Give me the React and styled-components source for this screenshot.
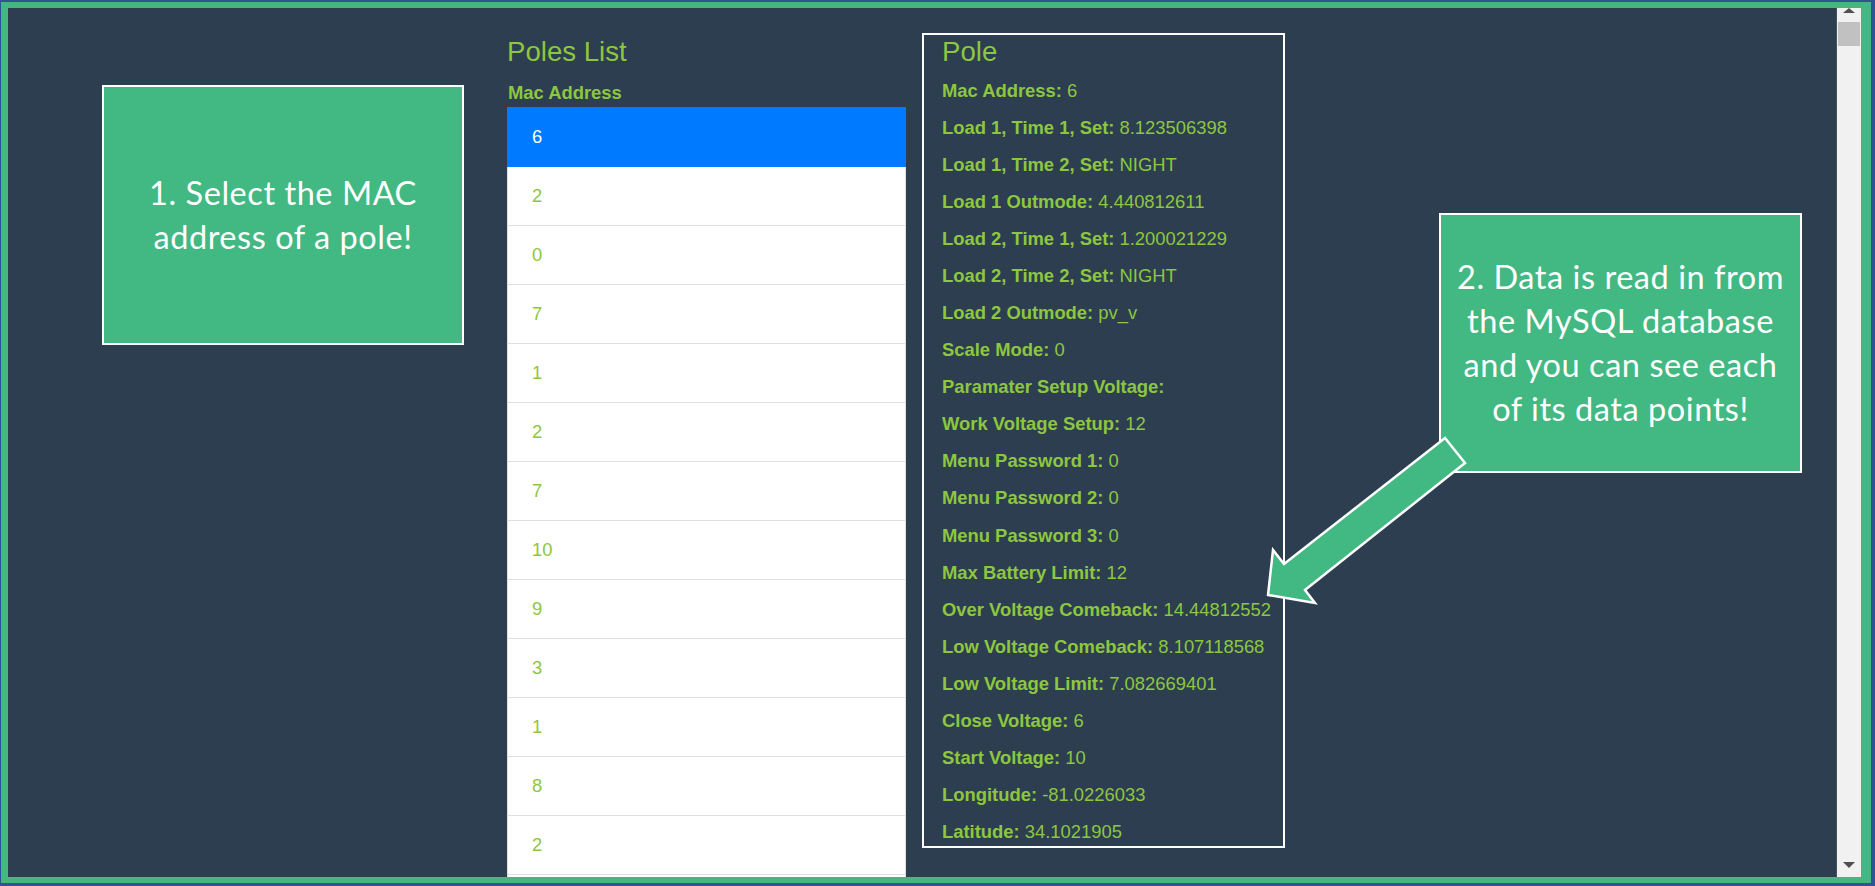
import React from 'react';
import styled, {createGlobalStyle} from 'styled-components';

const GlobalStyle = createGlobalStyle`
    html, body {
        margin: 0;
        padding: 0;
    }
    body {
        background: #2f5496;
        overflow: hidden;
        font-family: "Liberation Sans", Arial, sans-serif;
    }
`;

const GREEN = '#42b883';
const LIME = '#8dc63f';
const SLATE = '#2c3e50';

const Frame = styled.div`
    width: 1875px;
    height: 886px;
    box-sizing: border-box;
    padding: 2px 4px 3px 1px;
    background: #2f5496;
`;

const Page = styled.div`
    position: relative;
    height: 100%;
    box-sizing: border-box;
    border-style: solid;
    border-color: ${GREEN};
    border-width: 6px 10px 6px 7px;
    background: ${SLATE};
    display: flex;
    overflow: hidden;
`;

const Main = styled.div`
    flex: 1;
    display: flex;
    align-items: flex-start;
    padding: 25px 0 0 94px;
    min-width: 0;
`;

const Callout = styled.div`
    box-sizing: border-box;
    flex: none;
    width: ${p => p.$width}px;
    height: ${p => p.$height}px;
    margin-top: ${p => p.$top}px;
    margin-left: ${p => p.$left || 0}px;
    border: 2px solid #fff;
    background: ${GREEN};
    color: #fff;
    display: flex;
    align-items: center;
    justify-content: center;
    text-align: center;
    font-family: Lato, "Open Sans", sans-serif;
    font-size: 32.5px;
    letter-spacing: 0.55px;
    line-height: 44px;
`;

const ListColumn = styled.div`
    flex: none;
    width: 399px;
    margin: 2px 0 0 43px;
`;

const Title = styled.h3`
    margin: 0 0 ${p => p.$gap}px;
    font-size: 27.6px;
    font-weight: 400;
    line-height: 1.2;
    color: ${LIME};
`;

const ColumnHeader = styled.div`
    padding-left: 1px;
    font-size: 18.4px;
    font-weight: 700;
    line-height: 27.6px;
    color: ${LIME};
`;

const ListGroup = styled.ul`
    list-style: none;
    margin: 0;
    padding: 0;
`;

const ListItem = styled.li`
    box-sizing: border-box;
    height: 60px;
    margin-bottom: -1px;
    padding: 0 24px;
    display: flex;
    align-items: center;
    font-size: 18.4px;
    position: relative;
    z-index: ${p => (p.$active ? 2 : 1)};
    border: 1px solid ${p => (p.$active ? '#007bff' : '#dfdfdf')};
    background: ${p => (p.$active ? '#007bff' : '#fff')};
    color: ${p => (p.$active ? '#fff' : LIME)};
`;

const PolePanel = styled.div`
    box-sizing: border-box;
    flex: none;
    width: 363px;
    height: 815px;
    margin-left: 16px;
    padding: 0 18px;
    border: 2px solid #fff;
`;

const Fields = styled.div`
    display: grid;
    row-gap: 9.47px;
`;

const Field = styled.div`
    font-size: 18.4px;
    line-height: 27.6px;
    color: ${LIME};
    white-space: nowrap;

    b {
        font-weight: 700;
    }
`;

const Scrollbar = styled.div`
    flex: none;
    width: 24px;
    border-left: 1px solid #46535f;
    background: #f1f1f1;
    display: flex;
    flex-direction: column;
    align-items: center;
`;

const ScrollArrow = styled.div`
    width: 0;
    height: 0;
    border-left: 6px solid transparent;
    border-right: 6px solid transparent;
    ${p => (p.$down
        ? `border-top: 6px solid #505050; margin: auto 0 9px;`
        : `border-bottom: 5px solid #505050; margin-top: 0;`)}
`;

const Thumb = styled.div`
    width: 22px;
    height: 24px;
    margin-top: 9px;
    background: #c1c1c1;
`;

const Arrow = styled.svg`
    position: absolute;
    left: 1252px;
    top: 422px;
    overflow: visible;
`;

// last entry is the row peeking in at the bottom edge
const macs = ['6', '2', '0', '7', '1', '2', '7', '10', '9', '3', '1', '8', '2', ''];

const pole = [
    ['Mac Address', '6'],
    ['Load 1, Time 1, Set', '8.123506398'],
    ['Load 1, Time 2, Set', 'NIGHT'],
    ['Load 1 Outmode', '4.440812611'],
    ['Load 2, Time 1, Set', '1.200021229'],
    ['Load 2, Time 2, Set', 'NIGHT'],
    ['Load 2 Outmode', 'pv_v'],
    ['Scale Mode', '0'],
    ['Paramater Setup Voltage', ''],
    ['Work Voltage Setup', '12'],
    ['Menu Password 1', '0'],
    ['Menu Password 2', '0'],
    ['Menu Password 3', '0'],
    ['Max Battery Limit', '12'],
    ['Over Voltage Comeback', '14.44812552'],
    ['Low Voltage Comeback', '8.107118568'],
    ['Low Voltage Limit', '7.082669401'],
    ['Close Voltage', '6'],
    ['Start Voltage', '10'],
    ['Longitude', '-81.0226033'],
    ['Latitude', '34.1021905']
];

export default function App() {
    return (
        <Frame>
            <GlobalStyle/>
            <Page>
                <Main>
                    <Callout $width={362} $height={260} $top={52}>
                        <div>1. Select the MAC<br/>address of a pole!</div>
                    </Callout>

                    <ListColumn>
                        <Title $gap={11}>Poles List</Title>
                        <ColumnHeader>Mac Address</ColumnHeader>
                        <ListGroup>
                            {macs.map((mac, i) => (
                                <ListItem key={i} $active={i === 0}>{mac}</ListItem>
                            ))}
                        </ListGroup>
                    </ListColumn>

                    <PolePanel>
                        <Title $gap={8.7}>Pole</Title>
                        <Fields>
                            {pole.map(([label, value]) => (
                                <Field key={label}><b>{label}:</b> {value}</Field>
                            ))}
                        </Fields>
                    </PolePanel>

                    <Callout $width={363} $height={260} $top={180} $left={154}>
                        <div>
                            2. Data is read in from<br/>
                            the MySQL database<br/>
                            and you can see each<br/>
                            of its data points!
                        </div>
                    </Callout>
                </Main>

                <Scrollbar>
                    <ScrollArrow/>
                    <Thumb/>
                    <ScrollArrow $down/>
                </Scrollbar>

                <Arrow width="220" height="190" viewBox="0 0 220 190">
                    <polygon
                        points="185,8 205,33 45,160 55,173 8,165 13,120 24,134"
                        fill={GREEN}
                        stroke="#fff"
                        strokeWidth="2.5"
                        strokeLinejoin="miter"
                    />
                </Arrow>
            </Page>
        </Frame>
    );
}
